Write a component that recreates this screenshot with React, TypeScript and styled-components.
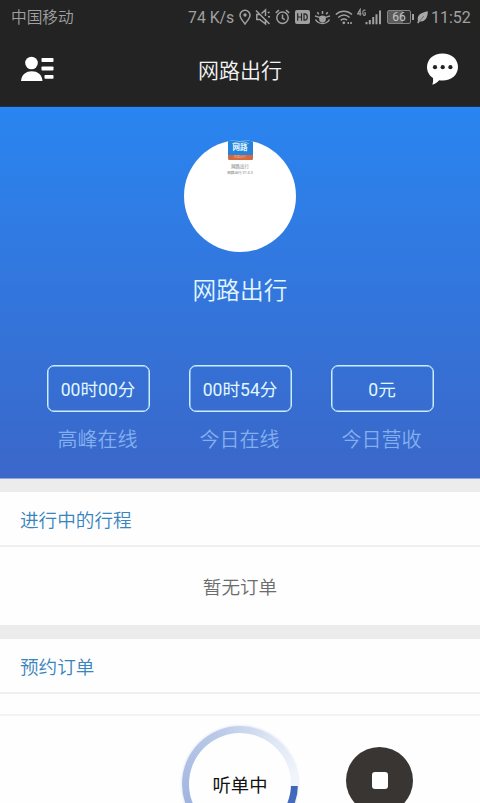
import React from "react";
import styled, { createGlobalStyle } from "styled-components";

const GlobalStyle = createGlobalStyle`
  * { box-sizing: border-box; }
  body {
    margin: 0;
    background: #fefefe;
    font-family: Roboto, "Noto Sans CJK SC", sans-serif;
    font-weight: 350;
  }
`;

const Screen = styled.main`
  width: 480px;
  height: 803px;
  overflow: hidden;
  display: flex;
  flex-direction: column;
  background: #fefefe;
`;

const StatusBar = styled.div`
  height: 34px;
  flex: none;
  display: flex;
  align-items: center;
  padding: 0 10px 1px 11px;
  background: #232323;
  color: #a0a0a0;
  font-size: 16px;
  line-height: 21px;
  font-weight: 400;
  white-space: nowrap;
`;

const Carrier = styled.span`
  flex: 1;
  padding-top: 2px;
  font-size: 15.7px;
  font-weight: 350;
`;

const Speed = styled.span`
  width: 51px;
  padding-top: 1px;
  font-size: 15.8px;
`;

const Clock = styled.span`
  width: 39px;
  margin-left: 3px;
  padding-top: 1px;
`;

const StatusIcon = styled.svg<{ $w: number; $gap: number }>`
  flex: none;
  width: ${(p) => p.$w}px;
  height: 18px;
  margin-left: ${(p) => p.$gap}px;
  fill: none;
  stroke: #a0a0a0;
  stroke-width: 1.5;
`;

const TitleBar = styled.header`
  height: 73px;
  flex: none;
  display: grid;
  grid-template-columns: 60px 1fr 60px;
  align-items: center;
  padding-bottom: 1px;
  background: #232323;
  border-bottom: 1px solid #16355c;
`;

const AppTitle = styled.h1`
  margin: 0;
  padding-top: 2px;
  text-align: center;
  color: #f4f4f4;
  font-size: 21px;
  line-height: 30px;
  font-weight: 350;
`;

const BarIcon = styled.svg<{ $right?: boolean }>`
  display: block;
  justify-self: ${(p) => (p.$right ? "end" : "start")};
  margin: ${(p) => (p.$right ? "0 21px 1px 0" : "0 0 1px 21px")};
`;

const Hero = styled.section`
  height: 372px;
  flex: none;
  display: flex;
  flex-direction: column;
  align-items: center;
  padding-top: 33px;
  background: linear-gradient(#2a85f0, #3b67c9);
  border-bottom: 1px solid #8fa6dc;
`;

const Avatar = styled.div`
  width: 112px;
  height: 112px;
  border-radius: 50%;
  overflow: hidden;
  background: #fff;
  display: flex;
  flex-direction: column;
  align-items: center;
`;

const Logo = styled.div`
  width: 25px;
  height: 20px;
  border-radius: 0 0 2px 2px;
  overflow: hidden;
  display: flex;
  flex-direction: column;
  background: #2484dc;
`;

const LogoArc = styled.svg`
  display: block;
  flex: none;
`;

const LogoName = styled.span`
  height: 11px;
  color: #e6f7ff;
  font-size: 7.5px;
  line-height: 8px;
  font-weight: 700;
  text-align: center;
`;

const LogoStrip = styled.span`
  height: 5px;
  background: #d4683f;
  color: #f0b79d;
  font-size: 3px;
  line-height: 4px;
  text-align: center;
`;

const AvatarCaption = styled.span<{ $size: number; $top: number }>`
  margin-top: ${(p) => p.$top}px;
  color: #777;
  font-size: ${(p) => p.$size}px;
  line-height: 5px;
  font-weight: 400;
`;

const DriverName = styled.h2`
  margin: 21px 0 0;
  color: #e2f6ff;
  font-size: 23.7px;
  line-height: 36px;
  font-weight: 350;
`;

const Stats = styled.div`
  margin-top: 56px;
  width: 388px;
  display: flex;
  justify-content: space-between;
`;

const Stat = styled.div`
  width: 104px;
  display: flex;
  flex-direction: column;
  align-items: center;
`;

const StatValue = styled.div`
  width: 103px;
  height: 47px;
  border: 1px solid #c9eefc;
  box-shadow: inset 0 0 0 0.5px #c9eefc;
  border-radius: 7px;
  display: flex;
  align-items: center;
  justify-content: center;
  padding-bottom: 1px;
  color: #e0f8ff;
  font-size: 17.6px;
  font-weight: 400;
`;

const StatLabel = styled.div`
  margin-top: 14px;
  margin-right: 1px;
  color: #83b0ef;
  font-size: 20px;
  line-height: 28px;
`;

const Divider = styled.div<{ $h: number }>`
  height: ${(p) => p.$h}px;
  flex: none;
  background: #ececec;
`;

const SectionTitle = styled.h3<{ $h: number }>`
  flex: none;
  height: ${(p) => p.$h}px;
  margin: 0;
  padding: 0 20px 1px;
  display: flex;
  align-items: center;
  border-bottom: 2px solid #f0f0f0;
  color: #3884bf;
  font-size: 18.6px;
  font-weight: 350;
`;

const Empty = styled.div`
  height: 78px;
  flex: none;
  display: flex;
  align-items: center;
  justify-content: center;
  padding-bottom: 2px;
  color: #6c6c6c;
  font-size: 18.6px;
`;

const Spacer = styled.div`
  height: 20px;
  flex: none;
`;

const Dock = styled.footer`
  flex: 1;
  min-height: 0;
  overflow: hidden;
  border-top: 2px solid #f3f3f3;
  display: grid;
  grid-template-columns: 182px 116px 1fr;
  align-items: start;
`;

const Listening = styled.button`
  grid-column: 2;
  width: 116px;
  height: 116px;
  margin: 10px 0 0;
  padding: 7px;
  border: 0;
  border-radius: 50%;
  background: conic-gradient(
    from 92deg,
    #3d64b8 0deg,
    #6484c8 70deg,
    #9db2de 150deg,
    #abbde3 190deg,
    #bccbe9 250deg,
    #dce4f4 300deg,
    #f1f5fb 350deg
  );
  box-shadow: 0 0 3px #cfdbf0;
`;

const ListeningFace = styled.span`
  width: 102px;
  height: 102px;
  border-radius: 50%;
  background: #fefefe;
  display: flex;
  align-items: center;
  justify-content: center;
  color: #111;
  font: 400 18.3px Roboto, "Noto Sans CJK SC", sans-serif;
`;

const Stop = styled.button`
  width: 67px;
  height: 67px;
  margin: 31px 0 0 48px;
  padding: 0;
  border: 0;
  border-radius: 50%;
  background: #393533;
  display: flex;
  align-items: center;
  justify-content: center;
`;

const StopMark = styled.span`
  width: 16px;
  height: 17px;
  border-radius: 3px;
  background: #fff;
`;

const stats = [
  { value: "00时00分", label: "高峰在线" },
  { value: "00时54分", label: "今日在线" },
  { value: "0元", label: "今日营收" },
];

function StatusIcons() {
  return (
    <>
      {/* location */}
      <StatusIcon $w={12} $gap={0} viewBox="0 0 12 18">
        <path d="M6 16C3.500 12.600 1 10 1 7.200a5 5 0 0 1 10 0C11 10 8.500 12.600 6 16Z" />
        <circle cx="6" cy="7" r="1.700" fill="#a0a0a0" stroke="none" />
      </StatusIcon>
      {/* muted speaker */}
      <StatusIcon $w={16} $gap={4} viewBox="0 0 16 18">
        <path d="M4.500 6.500H1.800v5h3l5.700 4.500V11M6.500 5.500l4-3.500V8M1 2.500 14.500 16M12.800 5l1.700-1.200M13 8.800h2" />
      </StatusIcon>
      {/* alarm */}
      <StatusIcon $w={15} $gap={4} viewBox="0 0 15 18">
        <circle cx="7.500" cy="9.800" r="5.700" />
        <path d="M7.500 6.500v3.800l2.300 1.400M.8 4.800 4 2.200M14.200 4.800 11 2.200" />
      </StatusIcon>
      {/* HD voice */}
      <StatusIcon $w={15} $gap={5} viewBox="0 0 15 18">
        <rect x="0" y="2" width="15" height="14" rx="2" fill="#a0a0a0" stroke="none" />
        <path d="M2.700 5.300v7.400M6.500 5.300v7.400M2.700 9h3.800M9 5.900v6.200h.8c1.700 0 2.500-1 2.500-3.100s-.8-3.100-2.500-3.100Z" stroke="#262626" strokeWidth="1.200" />
      </StatusIcon>
      {/* eye comfort */}
      <StatusIcon $w={17} $gap={4} viewBox="0 0 17 18">
        <path d="M1 7.800c4.300 2.200 10.700 2.200 15 0M8.500 3v3M3.400 4.200l1.300 2.200M13.600 4.200l-1.300 2.200M1.500 11.500c1.500 2.600 4 4 7 4s5.500-1.400 7-4" />
        <circle cx="8.500" cy="11" r="3.400" fill="#a0a0a0" stroke="none" />
      </StatusIcon>
      {/* wifi */}
      <StatusIcon $w={18} $gap={4} viewBox="0 0 18 18">
        <path d="M.8 6.500c4.800-4.300 11.400-4.300 16.200 0M3.200 9.500c3.600-3 8-3 11.400 0M5.700 12.300c2.200-1.700 4.400-1.700 6.400 0" />
        <circle cx="8.800" cy="14.800" r="1.400" fill="#a0a0a0" stroke="none" />
        <path d="M12.500 15h1.500M15.200 15h1.600" strokeWidth="2" />
      </StatusIcon>
      {/* cellular */}
      <StatusIcon $w={25} $gap={4} viewBox="0 0 25 18">
        <path d="M3.200 7.700V1.400L.6 5.900h3.800M8.300 2.600C7.500 1.300 5.800 1.900 5.800 4.600c0 2.900 1.700 3.300 2.500 2.300V4.800H7.200" strokeWidth="1.100" />
        <path d="M9.500 14v2.300M12.800 12v4.300M16.200 9v7.300M19.500 6.200v10.100M23 2.500v13.800" strokeWidth="2" />
      </StatusIcon>
    </>
  );
}

const BatteryShell = styled.span`
  width: 24px;
  height: 14px;
  margin-left: 5px;
  border: 1px solid #858585;
  border-radius: 2px;
  background: linear-gradient(90deg, #5c5c5c 66%, #303030 66%);
  color: #c4c4c4;
  font-size: 12px;
  line-height: 12px;
  text-align: center;
`;

const BatteryTip = styled.span`
  width: 2px;
  height: 6px;
  margin-left: 1px;
  background: #a0a0a0;
`;

export default function App() {
  return (
    <>
      <GlobalStyle />
      <Screen>
        <StatusBar>
          <Carrier>中国移动</Carrier>
          <Speed>74 K/s</Speed>
          <StatusIcons />
          <BatteryShell>66</BatteryShell>
          <BatteryTip />
          <StatusIcon $w={11} $gap={3} viewBox="0 0 11 18">
            <path d="M1 12.500C-.2 8 3 4.500 10.800 3.200 11 9.500 8 14.200 2.800 13.400l-1.600 2-.9-.7Z" fill="#a8a8a8" stroke="none" />
            <path d="m2.800 13 4-5" stroke="#444" strokeWidth=".6" />
          </StatusIcon>
          <Clock>11:52</Clock>
        </StatusBar>

        <TitleBar>
          <BarIcon width="34" height="26" viewBox="0 0 34 26" fill="#fff">
            <circle cx="10.500" cy="7" r="6.300" />
            <path d="M0 25C.5 18.500 5 15.200 10.800 15.200S21 18.500 21.500 25Z" />
            <rect x="20.500" y="2" width="12" height="4" rx=".8" />
            <rect x="20.500" y="10.500" width="12" height="4" rx=".8" />
            <rect x="23.500" y="19" width="9" height="3.800" rx=".8" />
          </BarIcon>
          <AppTitle>网路出行</AppTitle>
          <BarIcon $right width="33" height="32" viewBox="0 0 33 32">
            <path d="M16.500.5C25.500.5 32 6.300 32 14s-6.500 13.500-15.500 13.500c-1.200 0-2.300 0-3.300-.3C11.300 29.400 9 31 6.400 31.800c.7-2.300.8-4.300.6-6.800C3.300 22.500 1 18.700 1 14 1 6.300 7.500.5 16.500.5Z" fill="#fff" />
            <g fill="#232323">
              <circle cx="9" cy="14.200" r="2.100" />
              <circle cx="16.700" cy="14.200" r="2.100" />
              <circle cx="24.400" cy="14.200" r="2.100" />
            </g>
          </BarIcon>
        </TitleBar>

        <Hero>
          <Avatar>
            <Logo>
              <LogoArc width="25" height="4" viewBox="0 0 25 4">
                <path d="M4 4C9 .8 16 .8 21 4" fill="none" stroke="#9fd5f8" strokeWidth=".8" />
              </LogoArc>
              <LogoName>网路</LogoName>
              <LogoStrip>网路出行</LogoStrip>
            </Logo>
            <AvatarCaption $size={4.4} $top={4}>网路出行</AvatarCaption>
            <AvatarCaption $size={3.6} $top={2}>网路出行 V1.0.3</AvatarCaption>
          </Avatar>
          <DriverName>网路出行</DriverName>
          <Stats>
            {stats.map((s) => (
              <Stat key={s.label}>
                <StatValue>{s.value}</StatValue>
                <StatLabel>{s.label}</StatLabel>
              </Stat>
            ))}
          </Stats>
        </Hero>

        <Divider $h={13} />
        <SectionTitle $h={55}>进行中的行程</SectionTitle>
        <Empty>暂无订单</Empty>
        <Divider $h={14} />
        <SectionTitle $h={55}>预约订单</SectionTitle>
        <Spacer />
        <Dock>
          <Listening>
            <ListeningFace>听单中</ListeningFace>
          </Listening>
          <Stop aria-label="停止听单">
            <StopMark />
          </Stop>
        </Dock>
      </Screen>
    </>
  );
}
